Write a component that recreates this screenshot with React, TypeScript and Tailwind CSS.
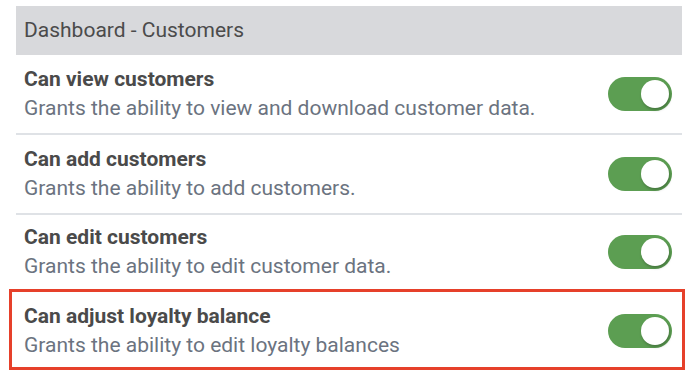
import type { ReactNode } from 'react'

const ROWS = [
  { title: 'Can view customers', desc: 'Grants the ability to view and download customer data.' },
  { title: 'Can add customers', desc: 'Grants the ability to add customers.' },
  { title: 'Can edit customers', desc: 'Grants the ability to edit customer data.' },
]

function Toggle() {
  return (
    <div className="relative h-[34px] w-[64px] shrink-0 rounded-full bg-[#5c9e52]">
      <span className="absolute right-[3px] top-[3px] h-[28px] w-[28px] rounded-full bg-white shadow-[1px_2px_3px_rgba(0,0,0,0.25)]" />
    </div>
  )
}

function Row({ title, desc, children }: { title: string; desc: string; children?: ReactNode }) {
  return (
    <div className="flex h-full items-center justify-between">
      <div className="flex flex-col">
        <div className="text-[21px] font-bold leading-[28px] text-[#4a4a4a]">{title}</div>
        <div className="text-[21px] leading-[30px] text-[#6b7380]">{desc}</div>
      </div>
      {children}
    </div>
  )
}

export default function App() {
  return (
    <div className="h-[372px] w-[700px] overflow-hidden bg-white pl-4 pr-[18px] pt-[6px] font-['Roboto',sans-serif]">
      <div className="flex h-[49px] items-center bg-[#d8d9dc] px-2 text-[21px] text-[#4b4b4b]">
        Dashboard - Customers
      </div>
      {ROWS.map((r, i) => (
        <div
          key={r.title}
          className={i < 2 ? 'h-[80px] border-b-2 border-[#dfe2e6] pl-2 pr-[10px]' : 'h-[74px] pl-2 pr-[10px] pb-[1px]'}
        >
          <Row title={r.title} desc={r.desc}>
            <Toggle />
          </Row>
        </div>
      ))}
      <div className="-ml-[7px] -mr-[3px] h-[81px] border-[3px] border-[#e6402a] pl-[12px] pr-[10px] pt-[2px]">
        <Row title="Can adjust loyalty balance" desc="Grants the ability to edit loyalty balances">
          <Toggle />
        </Row>
      </div>
    </div>
  )
}
